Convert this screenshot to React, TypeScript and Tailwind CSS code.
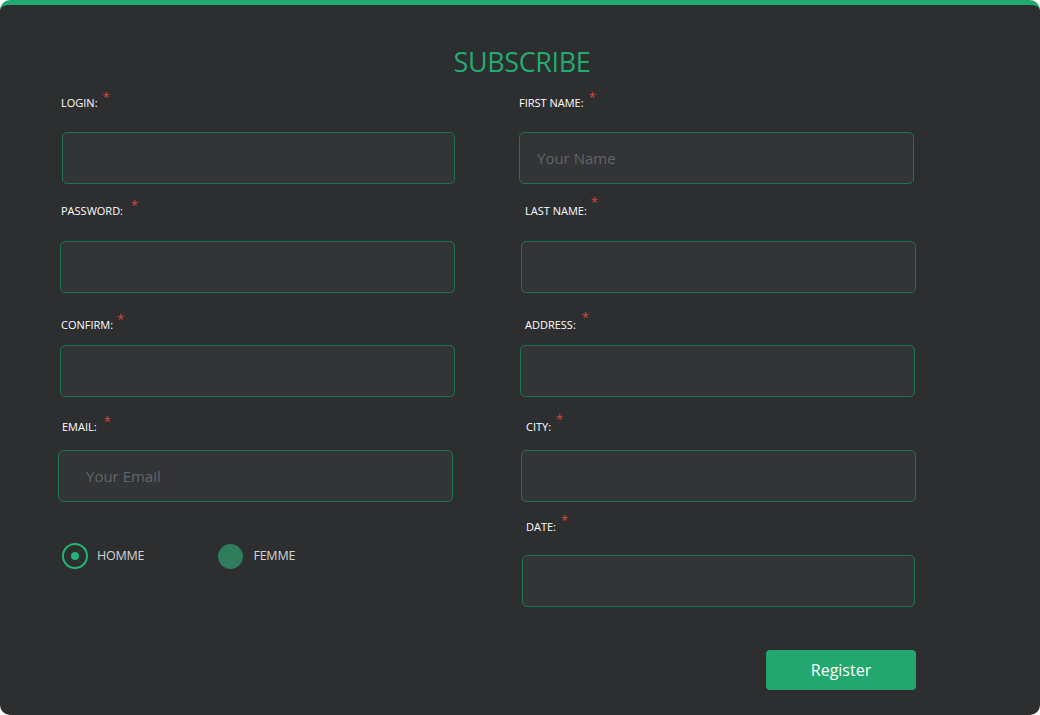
import React from "react";

const font = { fontFamily: '"Open Sans", "Noto Sans", sans-serif' };

function Label({ text, cls, starCls }: { text: string; cls: string; starCls?: string }) {
  return (
    <div className={"flex items-start h-[15px] text-[11px] leading-[15px] text-white " + cls}>
      <span className="mt-[1px]">{text}</span>
      <span className={"text-[#d9473b] text-[13px] leading-[10px] " + (starCls ?? "ml-[5px] -mt-[2px]")}>*</span>
    </div>
  );
}

function Input({ cls, placeholder, phCls }: { cls: string; placeholder?: string; phCls?: string }) {
  return (
    <div
      className={
        "h-[52px] w-[393px] rounded-[5px] border border-[#1e744f] bg-[#333436] flex items-center text-[15px] text-[#626466] " +
        cls
      }
    >
      {placeholder ? <span className={phCls}>{placeholder}</span> : null}
    </div>
  );
}

export default function App() {
  return (
    <div className="w-[1040px] h-[715px] bg-white" style={font}>
      <div className="w-[1040px] h-[715px] rounded-[10px] border-t-[5px] border-[#23a96f] bg-[#2d2e30] relative overflow-hidden">
        <div className="flex justify-center pt-[40px]">
          <h1 className="text-[27px] leading-[34px] text-[#23ab70] tracking-[-0.4px] ml-[4px]">
            SUBSCRIBE
          </h1>
        </div>
        <div className="flex">
          {/* Left column */}
          <div className="w-[460px] pl-[58px] flex flex-col">
            <Label text="LOGIN:" cls="mt-[15px] ml-[3px]" />
            <Input cls="mt-[23px] ml-[4px]" />
            <Label text="PASSWORD:" cls="mt-[18px] ml-[3px]" starCls="ml-[8px] -mt-[2px]" />
            <Input cls="mt-[24px] ml-[2px] w-[395px]" />
            <Label text="CONFIRM:" cls="mt-[23px] ml-[3px]" starCls="ml-[4px] -mt-[2px]" />
            <Input cls="mt-[14px] ml-[2px] w-[395px]" />
            <Label text="EMAIL:" cls="mt-[21px] ml-[4px]" starCls="ml-[7px] -mt-[2px]" />
            <Input cls="mt-[17px] w-[395px]" placeholder="Your Email" phCls="ml-[27px]" />
            <div className="flex items-center mt-[41px] ml-[4px] h-[26px]">
              <div className="w-[26px] h-[26px] rounded-full border-2 border-[#22b573] flex items-center justify-center">
                <div className="w-[8px] h-[8px] rounded-full bg-[#22b573]" />
              </div>
              <span className="ml-[9px] text-[12.5px] text-[#d4d4d4] tracking-[-0.2px]">HOMME</span>
              <div className="ml-[74px] w-[25px] h-[25px] rounded-full bg-[#2f7d5c]" />
              <span className="ml-[10px] text-[12.5px] text-[#d4d4d4] tracking-[-0.2px]">FEMME</span>
            </div>
          </div>
          {/* Right column */}
          <div className="w-[400px] pl-[59px] flex flex-col">
            <Label text="FIRST NAME:" cls="mt-[15px]" />
            <Input cls="mt-[23px] w-[395px]" placeholder="Your Name" phCls="ml-[17px]" />
            <Label text="LAST NAME:" cls="mt-[18px] ml-[6px]" starCls="ml-[4px] -mt-[5px]" />
            <Input cls="mt-[24px] ml-[2px] w-[395px]" />
            <Label text="ADDRESS:" cls="mt-[23px] ml-[6px]" starCls="ml-[6px] -mt-[4px]" />
            <Input cls="mt-[14px] ml-[1px] w-[395px]" />
            <Label text="CITY:" cls="mt-[21px] ml-[7px]" starCls="ml-[5px] -mt-[4px]" />
            <Input cls="mt-[17px] ml-[2px] w-[395px]" />
            <Label text="DATE:" cls="mt-[16px] ml-[7px]" starCls="ml-[5px] -mt-[3px]" />
            <Input cls="mt-[22px] ml-[3px] w-[393px]" />
            <div className="flex justify-end w-[397px] mt-[43px]">
              <button className="w-[150px] h-[40px] rounded-[4px] bg-[#22a86e] text-white text-[16px] leading-[38px]">
                Register
              </button>
            </div>
          </div>
        </div>
      </div>
    </div>
  );
}
